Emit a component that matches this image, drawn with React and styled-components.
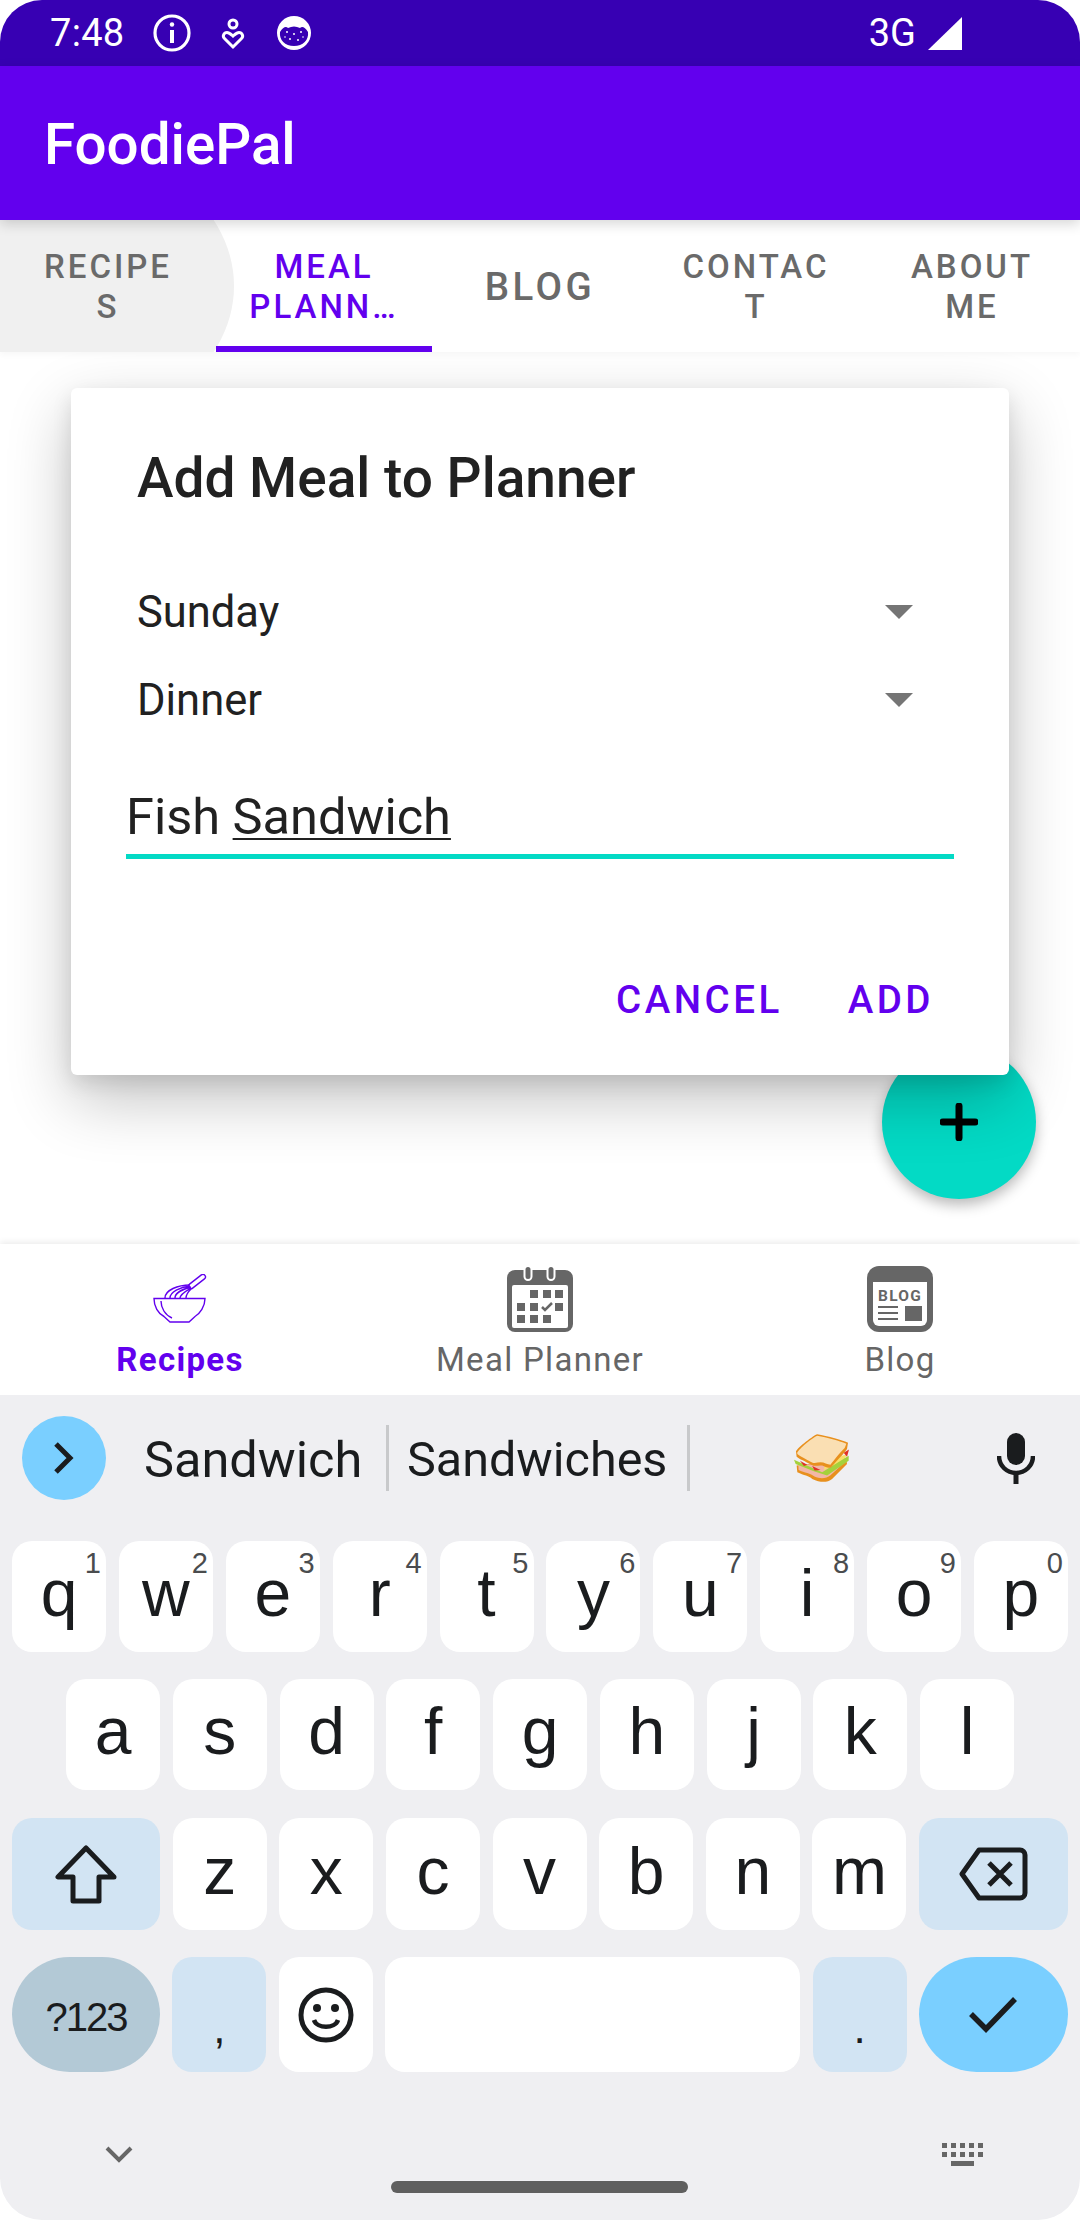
import React from 'react';
import styled, { createGlobalStyle } from 'styled-components';

const Global = createGlobalStyle`
  html, body { margin: 0; padding: 0; background: #fff; }
  * { box-sizing: border-box; }
  body { font-family: Roboto, "Liberation Sans", sans-serif; }
`;

const Screen = styled.div`
  position: relative; width: 1080px; height: 2220px; display: flex; flex-direction: column;
  overflow: hidden; background: #fff; border-radius: 42px;
`;
const StatusBar = styled.div`
  height: 66px; flex: none; background: #3700b3; color: #fff; display: flex; align-items: center;
  padding: 0 118px 0 50px;
`;
const Clock = styled.span`font-size: 38px; line-height: 1; letter-spacing: 0.3px; margin-right: 28px; margin-top: -1px;`;
const StatusIcons = styled.div`display: flex; align-items: center; flex: 1;`;
const Net = styled.span`font-size: 38px; line-height: 1; margin-right: 12px; margin-top: -1px;`;
const AppBar = styled.div`
  height: 154px; flex: none; background: #6200ee; color: #fff; display: flex; align-items: center; padding: 4px 0 0 44px;
  font-size: 56.5px; font-weight: 500; box-shadow: 0 4px 12px rgba(0,0,0,.16); position: relative; z-index: 2;
`;
const Tabs = styled.div`
  height: 132px; flex: none; display: grid; grid-template-columns: repeat(5, 216px); background: #fff;
  box-shadow: 0 3px 6px rgba(0,0,0,.03); position: relative; z-index: 1;
`;
const RippleClip = styled.div`position: absolute; inset: 0; overflow: hidden;`;
const Tab = styled.div`
  position: relative; display: flex; align-items: center; justify-content: center; text-align: center;
  font-size: ${p => p.$big ? 38.5 : 33}px; font-weight: 500; line-height: 40px; letter-spacing: ${p => p.$big ? 3.5 : 3}px;
  color: ${p => p.$active ? '#6200ee' : '#6a6a6a'};
  padding: 2px 20px 0; z-index: 1; white-space: pre-line;
`;
const Indicator = styled.div`position: absolute; left: 0; right: 0; bottom: 0; height: 6px; background: #6200ee;`;
const Ripple = styled.div`
  position: absolute; left: -200px; top: -90px; width: 434px; height: 312px; border-radius: 50%; background: #f0f0f0;
`;
const Content = styled.div`flex: 1; position: relative; background: #fff;`;
const Fab = styled.div`
  position: absolute; left: 882px; top: 693px; width: 154px; height: 154px; border-radius: 50%; background: #03dac5;
  box-shadow: 0 6px 14px rgba(0,0,0,.28); display: flex; align-items: center; justify-content: center;
`;
const Dialog = styled.div`
  position: absolute; left: 71px; top: 36px; width: 938px; height: 687px; background: #fff; border-radius: 6px;
  box-shadow: 0 24px 64px rgba(0,0,0,.24), 0 8px 20px rgba(0,0,0,.1);
  padding: 0 55px 0 66px; display: flex; flex-direction: column;
`;
const DialogTitle = styled.div`
  font-size: 55px; font-weight: 500; color: #212121; line-height: 60px; margin-top: 60px; margin-bottom: 60px;
`;
const Spinner = styled.div`
  height: 88px; display: flex; align-items: center; justify-content: space-between; color: #212121; font-size: 43.5px;
  padding-right: 41px;
`;
const Arrow = styled.span`
  width: 0; height: 0; border-left: 14px solid transparent; border-right: 14px solid transparent; border-top: 14px solid #757575;
`;
const Field = styled.div`
  margin: 47px 0 0 -11px; height: 68px; border-bottom: 5px solid #03dac5; font-size: 50.5px; line-height: 52px; color: #212121;
`;
const Under = styled.span`text-decoration: underline; text-decoration-thickness: 2px; text-underline-offset: 4px;`;
const Actions = styled.div`margin-top: auto; margin-bottom: 51px; display: flex; justify-content: flex-end; gap: 65px; padding-right: 20px;`;
const Action = styled.span`font-size: 38.5px; font-weight: 500; letter-spacing: 3.5px; color: #6200ee; line-height: 48px;`;

const BottomNav = styled.div`
  height: 151px; flex: none; display: grid; grid-template-columns: repeat(3, 360px); background: #fff;
  box-shadow: 0 -2px 6px rgba(0,0,0,.08); position: relative; z-index: 1;
`;
const NavItem = styled.div`
  display: flex; flex-direction: column; align-items: center; color: ${p => p.$active ? '#6200ee' : '#666'};
  font-size: 33px; font-weight: ${p => p.$active ? 700 : 400}; letter-spacing: 1.3px;
`;
const NavIcon = styled.div`height: 66px; margin-top: 22px; display: flex; align-items: center; justify-content: center;`;
const NavLabel = styled.div`line-height: 40px; margin-top: 8px;`;

const Keyboard = styled.div`
  height: 825px; flex: none; background: #efeff2; display: flex; flex-direction: column; padding: 0 12px; position: relative; z-index: 2;
`;
const SuggestRow = styled.div`height: 146px; display: flex; align-items: center; padding-bottom: 20px;`;
const Expand = styled.div`
  width: 84px; height: 84px; margin-left: 10px; border-radius: 50%; background: #7acfff; display: flex; align-items: center; justify-content: center;
`;
const Word = styled.div`font-size: ${p => p.$fs}px; color: #1a1c1e; width: ${p => p.$w}px; line-height: 60px; padding: 4px 0 0 ${p => p.$pad}px; flex: none;`;
const Divider = styled.div`width: 3px; height: 66px; background: #c8c9cb; flex: none;`;
const EmojiCell = styled.div`flex: 1; display: flex; justify-content: center; padding-right: 41px;`;
const Mic = styled.div`width: 44px; margin-right: 30px; display: flex; justify-content: center;`;
const KeyRow = styled.div`
  display: flex; height: ${p => p.$h || 111}px; margin-top: ${p => p.$mt ?? 27}px; padding: 0 ${p => p.$pad || 0}px; justify-content: space-between;
`;
const Key = styled.div`
  position: relative; width: ${p => p.$w || 94}px; height: 100%; flex: none; border-radius: ${p => p.$pill ? '58px' : '20px'};
  background: ${p => p.$bg || '#fff'}; color: #1a1c1e; display: flex; align-items: center; justify-content: center;
  font-family: "Liberation Sans", Arial, sans-serif; font-size: 66px; line-height: 1;
`;
const Hint = styled.span`position: absolute; top: 8px; right: 5px; font-size: 29px; color: #4a4c4e; font-family: "Liberation Sans", sans-serif;`;
const Letter = styled.span`display: block; margin-top: -7px;`;
const Punct = styled.span`display: block; font-size: 44px; margin-top: 26px;`;
const Symbols = styled.span`display: block; font-size: 40px; letter-spacing: -2px; margin-top: 4px;`;
const BottomBar = styled.div`flex: 1; position: relative; display: flex; justify-content: space-between; padding: 71px 85px 0 93px;`;
const DownWrap = styled.div`margin-top: 3px;`;
const Home = styled.div`
  position: absolute; left: 379px; top: 109px; width: 297px; height: 12px; border-radius: 6px; background: #5f5f5f;
`;
const IconGap = styled.span`display: flex; margin-left: ${p => p.$m}px;`;

const Info = () => (
  <svg width="40" height="40" viewBox="0 0 40 40" fill="none" stroke="#fff"><circle cx="20" cy="20" r="17" strokeWidth="3.2" /><path d="M20 17v13" strokeWidth="4" /><circle cx="20" cy="11.5" r="2.2" fill="#fff" stroke="none" /></svg>
);
const Care = () => (
  <svg width="30" height="34" viewBox="0 0 30 34" fill="none" stroke="#fff" strokeWidth="3"><circle cx="15" cy="8" r="4" /><path d="M15 31L6.5 22.5c-2.500-2.500-.5-6 2.500-6 2 0 3 1 6 3.500 3-2.500 4-3.500 6-3.500 3 0 5 3.500 2.500 6z" /></svg>
);
const Cat = () => (
  <svg width="36" height="36" viewBox="0 0 36 36"><circle cx="18" cy="18" r="17" fill="#fff" /><path d="M4 17c3-5 6-6 8-4 4-2 8-2 12 0 2-2 5-1 8 4 1 8-5 14-14 14S3 25 4 17z" fill="#3700b3" /><g fill="#fff"><circle cx="11" cy="17" r="1" /><circle cx="18" cy="19" r="1" /><circle cx="25" cy="17" r="1" /><circle cx="14" cy="24" r="1" /><circle cx="22" cy="25" r="1" /><circle cx="9" cy="22" r=".8" /><circle cx="27" cy="22" r=".8" /></g></svg>
);
const Signal = () => (
  <svg width="34" height="33" viewBox="0 0 34 33"><path d="M0 33L34 0v33z" fill="#fff" /></svg>
);
const Whisk = () => (
  <svg width="54" height="50" viewBox="0 0 54 50" fill="none" stroke="#6200ee" strokeWidth="1.4">
    <path d="M1 24.500H52c0 8-5 15-10 18l-6 5.500H17l-6-5.500C5 39.500 1 32.500 1 24.500z" />
    <path d="M8 27c0 7 4 14 11 17" />
    <path d="M37 11C25 11 12 16 12 24M37 12C27 13 17 18 17 24M38 13C30 15 22 19 22 24M38 14C33 17 27 20 27 24M38 15C35 18 33 21 33 24" />
    <rect x="34" y="5" width="20" height="5" rx="2.500" transform="rotate(-38 44 7.500)" />
  </svg>
);
const Calendar = () => (
  <svg width="66" height="66" viewBox="0 0 66 66">
    <path d="M8 4h50a8 8 0 0 1 8 8v46a8 8 0 0 1-8 8H8a8 8 0 0 1-8-8V12a8 8 0 0 1 8-8z" fill="#666" />
    <rect x="5" y="19" width="56" height="43" rx="2" fill="#fff" />
    <rect x="17.500" y="0" width="7" height="14" rx="3.500" fill="#666" stroke="#fff" strokeWidth="2" />
    <rect x="40.500" y="0" width="7" height="14" rx="3.500" fill="#666" stroke="#fff" strokeWidth="2" />
    <g fill="#666">
      <rect x="23" y="24" width="8" height="8" /><rect x="36" y="24" width="8" height="8" /><rect x="48" y="24" width="8" height="8" />
      <rect x="10" y="37" width="8" height="8" /><rect x="23" y="37" width="8" height="8" /><rect x="48" y="37" width="8" height="8" />
      <rect x="10" y="49" width="8" height="8" /><rect x="23" y="49" width="8" height="8" /><rect x="36" y="49" width="8" height="8" />
    </g>
    <path d="M35 41l3 3 7-7" fill="none" stroke="#666" strokeWidth="2.500" />
  </svg>
);
const BlogIcon = () => (
  <svg width="66" height="66" viewBox="0 0 66 66">
    <rect width="66" height="66" rx="12" fill="#666" />
    <path d="M6 16h54v38a6 6 0 0 1-6 6H12a6 6 0 0 1-6-6z" fill="#fff" />
    <text x="33" y="35" textAnchor="middle" fontFamily="Roboto, sans-serif" fontWeight="700" fontSize="15.500" letterSpacing="1.200" fill="#666">BLOG</text>
    <g fill="#666"><rect x="11" y="40" width="20" height="2" /><rect x="11" y="46" width="20" height="2" /><rect x="11" y="52" width="20" height="2" /><rect x="38" y="40" width="17" height="15" /></g>
  </svg>
);
const Plus = () => (
  <svg width="38" height="38" viewBox="0 0 38 38"><path d="M19 3v32M3 19h32" stroke="#000" strokeWidth="7" strokeLinecap="round" /></svg>
);
const Chevron = () => (
  <svg width="22" height="34" viewBox="0 0 22 34" fill="none"><path d="M3 3l14 14L3 31" stroke="#1a1c1e" strokeWidth="5" /></svg>
);
const Sandwich = () => (
  <svg width="55" height="49" viewBox="0 0 166 147">
    <path d="M8 95L10 115C30 125 45 125 55 135C80 147 100 147 115 135L160 90L158 75z" fill="#e8901e" />
    <path d="M13 92L14 108C32 116 50 118 62 128C80 136 98 134 110 124L150 88z" fill="#f2b7a6" />
    <path d="M95 85L160 60L150 82L90 108z" fill="#f8e06a" />
    <path d="M0 77L85 115L165 65L165 80L100 125L60 112L5 90z" fill="#a5d13c" />
    <path d="M18 80L40 92L30 96zM55 96L80 108L62 110zM150 56L166 46L160 68z" fill="#e03127" />
    <path d="M6 52C10 40 60 3 70 0C100 5 150 18 163 26L160 45C150 60 125 85 112 100C105 104 95 100 85 95C75 92 65 100 52 92C35 82 15 75 8 68z" fill="#e8901e" />
    <path d="M10 55C25 35 55 12 70 5C100 10 135 20 158 29L153 42C135 60 120 80 110 92C100 92 92 85 80 85C70 85 60 90 50 83C35 75 20 68 10 60z" fill="#fadfb3" />
  </svg>
);
const MicIcon = () => (
  <svg width="38" height="51" viewBox="0 0 38 51" fill="none"><rect x="10" y="0" width="18" height="32" rx="9" fill="#1a1c1e" /><path d="M2 23c0 10 8 17 17 17s17-7 17-17" stroke="#1a1c1e" strokeWidth="4.500" /><path d="M19 40v11" stroke="#1a1c1e" strokeWidth="5" /></svg>
);
const Shift = () => (
  <svg width="62" height="59" viewBox="0 0 62 59" fill="none"><path d="M31 3L3 32h15v24h26V32h15z" stroke="#1a1c1e" strokeWidth="5" strokeLinejoin="round" /></svg>
);
const Backspace = () => (
  <svg width="69" height="54" viewBox="0 0 69 54" fill="none"><path d="M20 3h41a5 5 0 0 1 5 5v38a5 5 0 0 1-5 5H20L3 27z" stroke="#1a1c1e" strokeWidth="5" strokeLinejoin="round" /><path d="M30 16l22 22M52 16L30 38" stroke="#1a1c1e" strokeWidth="5" /></svg>
);
const Smile = () => (
  <svg width="56" height="56" viewBox="0 0 56 56" fill="none"><circle cx="28" cy="28" r="25" stroke="#1a1c1e" strokeWidth="5" /><circle cx="19" cy="21" r="4" fill="#1a1c1e" /><circle cx="37" cy="21" r="4" fill="#1a1c1e" /><path d="M16 33c3 9 21 9 24 0" stroke="#1a1c1e" strokeWidth="4.500" /></svg>
);
const Check = () => (
  <svg width="50" height="38" viewBox="0 0 50 38" fill="none"><path d="M3 18l15 15L47 3" stroke="#1a1c1e" strokeWidth="5.500" /></svg>
);
const ChevronDown = () => (
  <svg width="28" height="17" viewBox="0 0 28 17" fill="none"><path d="M2 2l12 12L26 2" stroke="#666" strokeWidth="4" /></svg>
);
const KbIcon = () => (
  <svg width="41" height="23" viewBox="0 0 41 23" fill="#666">
    {[0, 9, 18, 27, 36].map(x => <rect key={x} x={x} y="0" width="5" height="5" />)}
    {[0, 9, 18, 27, 36].map(x => <rect key={x} x={x} y="9" width="5" height="5" />)}
    <rect x="9" y="18" width="23" height="5" />
  </svg>
);

const r1 = [['q', '1'], ['w', '2'], ['e', '3'], ['r', '4'], ['t', '5'], ['y', '6'], ['u', '7'], ['i', '8'], ['o', '9'], ['p', '0']];
const r2 = ['a', 's', 'd', 'f', 'g', 'h', 'j', 'k', 'l'];
const r3 = ['z', 'x', 'c', 'v', 'b', 'n', 'm'];
const BLUE = '#d2e4f3';

export default function App() {
  return (
    <Screen>
      <Global />
      <StatusBar>
        <Clock>7:48</Clock>
        <StatusIcons>
          <Info />
          <IconGap $m={26}><Care /></IconGap>
          <IconGap $m={28}><Cat /></IconGap>
        </StatusIcons>
        <Net>3G</Net>
        <Signal />
      </StatusBar>
      <AppBar>FoodiePal</AppBar>
      <Tabs>
        <RippleClip><Ripple /></RippleClip>
        <Tab>{'RECIPE\nS'}</Tab>
        <Tab $active>{'MEAL\nPLANN…'}<Indicator /></Tab>
        <Tab $big>BLOG</Tab>
        <Tab>{'CONTAC\nT'}</Tab>
        <Tab>{'ABOUT\nME'}</Tab>
      </Tabs>
      <Content>
        <Fab><Plus /></Fab>
        <Dialog>
          <DialogTitle>Add Meal to Planner</DialogTitle>
          <Spinner>Sunday<Arrow /></Spinner>
          <Spinner>Dinner<Arrow /></Spinner>
          <Field>Fish <Under>Sandwich</Under></Field>
          <Actions><Action>CANCEL</Action><Action>ADD</Action></Actions>
        </Dialog>
      </Content>
      <BottomNav>
        <NavItem $active><NavIcon><Whisk /></NavIcon><NavLabel>Recipes</NavLabel></NavItem>
        <NavItem><NavIcon><Calendar /></NavIcon><NavLabel>Meal Planner</NavLabel></NavItem>
        <NavItem><NavIcon><BlogIcon /></NavIcon><NavLabel>Blog</NavLabel></NavItem>
      </BottomNav>
      <Keyboard>
        <SuggestRow>
          <Expand><Chevron /></Expand>
          <Word $w={280} $pad={38} $fs={50.5}>Sandwich</Word>
          <Divider />
          <Word $w={298} $pad={18} $fs={48.5}>Sandwiches</Word>
          <Divider />
          <EmojiCell><Sandwich /></EmojiCell>
          <Mic><MicIcon /></Mic>
        </SuggestRow>
        <KeyRow $mt={0}>
          {r1.map(([l, h]) => <Key key={l}><Letter>{l}</Letter><Hint>{h}</Hint></Key>)}
        </KeyRow>
        <KeyRow $pad={54}>
          {r2.map(l => <Key key={l}><Letter>{l}</Letter></Key>)}
        </KeyRow>
        <KeyRow $mt={28} $h={112}>
          <Key $w={148} $bg={BLUE}><Shift /></Key>
          {r3.map(l => <Key key={l}><Letter>{l}</Letter></Key>)}
          <Key $w={149} $bg={BLUE}><Backspace /></Key>
        </KeyRow>
        <KeyRow $h={115}>
          <Key $w={148} $bg="#b3c9d6" $pill><Symbols>?123</Symbols></Key>
          <Key $bg={BLUE}><Punct>,</Punct></Key>
          <Key><Smile /></Key>
          <Key $w={415} />
          <Key $bg={BLUE}><Punct>.</Punct></Key>
          <Key $w={149} $bg="#7acfff" $pill><Check /></Key>
        </KeyRow>
        <BottomBar>
          <DownWrap><ChevronDown /></DownWrap>
          <KbIcon />
          <Home />
        </BottomBar>
      </Keyboard>
    </Screen>
  );
}
